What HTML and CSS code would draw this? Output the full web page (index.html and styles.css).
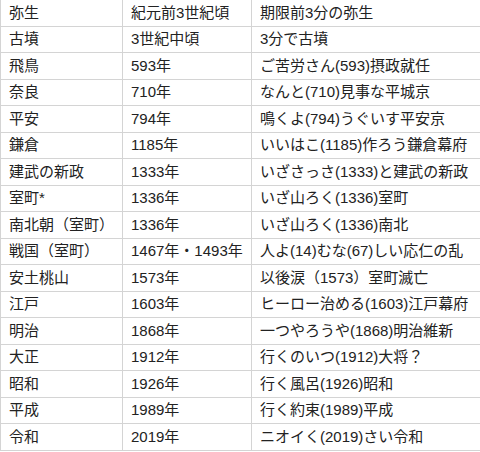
FILE: index.html
```html
<!DOCTYPE html>
<html lang="ja">
<head>
<meta charset="utf-8">
<link rel="stylesheet" href="styles.css">
</head>
<body>
<table class="era-table">
<colgroup><col class="c1"><col class="c2"><col class="c3"></colgroup>
<tbody>
<tr><td>弥生</td><td>紀元前3世紀頃</td><td>期限前3分の弥生</td></tr>
<tr><td>古墳</td><td>3世紀中頃</td><td>3分で古墳</td></tr>
<tr><td>飛鳥</td><td>593年</td><td>ご苦労さん(593)摂政就任</td></tr>
<tr><td>奈良</td><td>710年</td><td>なんと(710)見事な平城京</td></tr>
<tr><td>平安</td><td>794年</td><td>鳴くよ(794)うぐいす平安京</td></tr>
<tr><td>鎌倉</td><td>1185年</td><td>いいはこ(1185)作ろう鎌倉幕府</td></tr>
<tr><td>建武の新政</td><td>1333年</td><td>いざさっさ(1333)と建武の新政</td></tr>
<tr><td>室町*</td><td>1336年</td><td>いざ山ろく(1336)室町</td></tr>
<tr><td>南北朝（室町）</td><td>1336年</td><td>いざ山ろく(1336)南北</td></tr>
<tr><td>戦国（室町）</td><td>1467年・1493年</td><td>人よ(14)むな(67)しい応仁の乱</td></tr>
<tr><td>安土桃山</td><td>1573年</td><td>以後涙（1573）室町滅亡</td></tr>
<tr><td>江戸</td><td>1603年</td><td>ヒーロー治める(1603)江戸幕府</td></tr>
<tr><td>明治</td><td>1868年</td><td>一つやろうや(1868)明治維新</td></tr>
<tr><td>大正</td><td>1912年</td><td>行くのいつ(1912)大将？</td></tr>
<tr><td>昭和</td><td>1926年</td><td>行く風呂(1926)昭和</td></tr>
<tr><td>平成</td><td>1989年</td><td>行く約束(1989)平成</td></tr>
<tr><td>令和</td><td>2019年</td><td>ニオイく(2019)さい令和</td></tr>
</tbody>
</table>
</body>
</html>
```

FILE: styles.css
```css
html, body {
  margin: 0;
  padding: 0;
  background: #ffffff;
  overflow: hidden;
}
.era-table {
  border-collapse: collapse;
  table-layout: fixed;
  width: 480px;
  font-family: "Liberation Sans", "Noto Sans CJK JP", sans-serif;
  font-size: 15px;
  color: #222222;
}
.c1 { width: 122px; }
.c2 { width: 129px; }
.c3 { width: 229px; }
.era-table td {
  border: 1px solid #d4d4d4;
  padding: 0 8px;
  height: 25.5px;
  line-height: 20px;
  white-space: nowrap;
  vertical-align: middle;
  overflow: hidden;
}
.era-table td:last-child {
  border-right: none;
  padding-right: 0;
}
.era-table tr:first-child td {
  border-top: none;
}
```
